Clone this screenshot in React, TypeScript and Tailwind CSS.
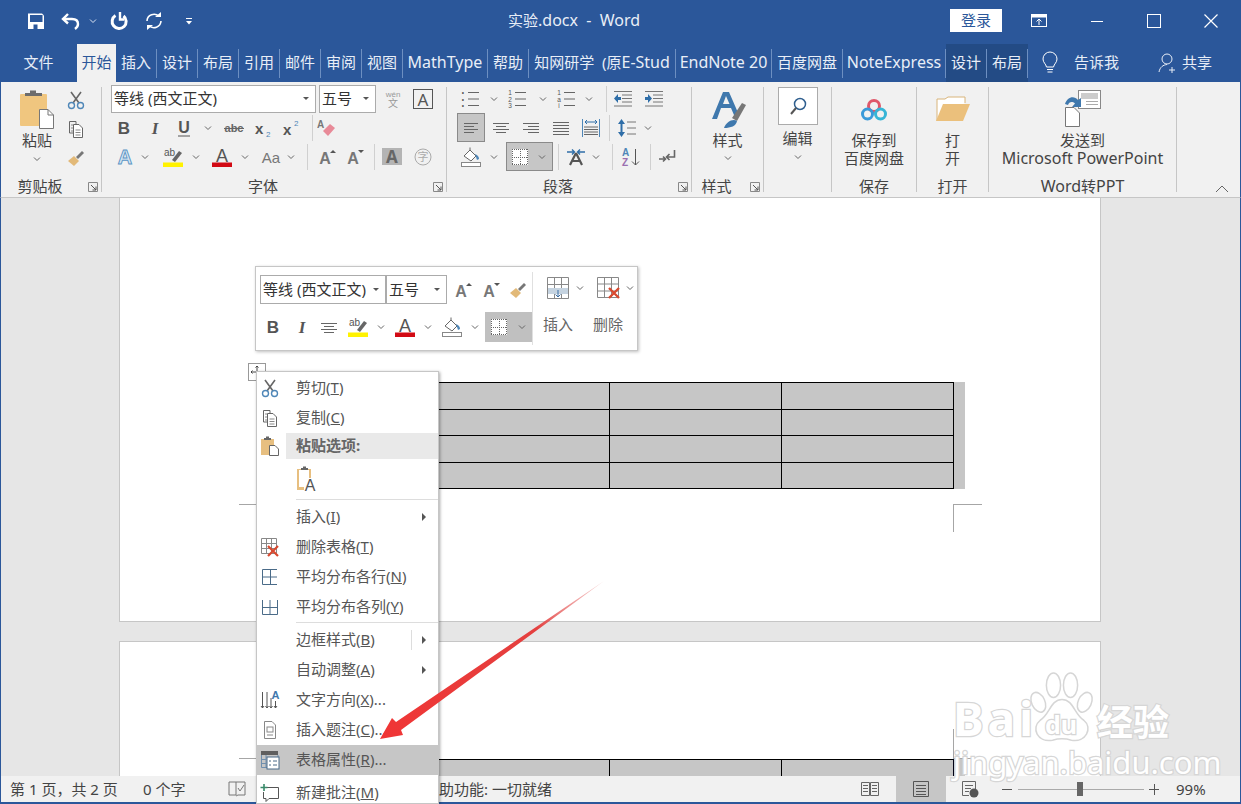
import type { ReactNode } from 'react';

const SANS = "font-['Noto_Sans','Noto_Sans_CJK_SC',sans-serif]";
const ROW_HEIGHTS = ['h-[28px]', 'h-[26px]', 'h-[27px]', 'h-[26px]'];

interface IconProps {
  className?: string;
  children?: ReactNode;
  w?: number;
  h?: number;
}

function Ic({ className = '', children, w = 20, h = 20 }: IconProps) {
  return (
    <svg className={'shrink-0 ' + className} width={w} height={h} viewBox={'0 0 ' + w + ' ' + h} fill="none">
      {children}
    </svg>
  );
}

function Latin({ children }: { children: ReactNode }) {
  return <span className="text-[16px]">{children}</span>;
}

function Chev({ className = '', color = '#666' }: { className?: string; color?: string }) {
  return (
    <Ic className={className} w={8} h={8}>
      <path d="M1 2.5 4 5.5 7 2.5" stroke={color} strokeWidth="1" />
    </Ic>
  );
}

function Sep({ className = '' }: { className?: string }) {
  return <span className={'h-[26px] w-px shrink-0 bg-[#d0d0d0] ' + className} />;
}

function Letter({ className = '', children, fill = '#555', size = 17, weight = 700, italic = false, serif = false }: { className?: string; children: ReactNode; fill?: string; size?: number; weight?: number; italic?: boolean; serif?: boolean }) {
  return (
    <Ic className={className}>
      <text x="10" y="16" textAnchor="middle" fontSize={size} fontWeight={weight} fontStyle={italic ? 'italic' : 'normal'} fontFamily={serif ? 'Liberation Serif' : 'Liberation Sans'} fill={fill}>
        {children}
      </text>
    </Ic>
  );
}

function Scissors({ className = '' }: { className?: string }) {
  return (
    <Ic className={className}>
      <path d="M5 2 13 13M15 2 7 13" stroke="#666" strokeWidth="1.6" />
      <circle cx="5.5" cy="15.5" r="3" stroke="#4f87b8" strokeWidth="1.4" />
      <circle cx="14.5" cy="15.5" r="3" stroke="#4f87b8" strokeWidth="1.4" />
    </Ic>
  );
}

function CopyIcon({ className = '' }: { className?: string }) {
  return (
    <Ic className={className}>
      <path d="M3.5 2.5H10V5M3.5 2.5V14H7" stroke="#666" />
      <path d="M7.5 5.5H13L16.5 9V18.5H7.5Z" fill="#fff" stroke="#666" />
      <path d="M5 6h2M5 9h2M5 12h2M9.5 11h5M9.5 13.5h5M9.5 16h5" stroke="#888" />
    </Ic>
  );
}

function Brush({ className = '' }: { className?: string }) {
  return (
    <Ic className={className}>
      <path d="M2 13 8 8 13 13 8 18Z" fill="#e2b978" />
      <path d="M10 9 16 3 18 5 12 11Z" fill="#777" />
    </Ic>
  );
}

function PasteBig() {
  return (
    <Ic w={36} h={40}>
      <rect x="1" y="4" width="27" height="32" rx="1" fill="#f0c67f" />
      <path d="M6 6V3H11V0.5H17V3H23V6Z" fill="#6d6d6d" />
      <path d="M20.5 19.5H29L34.5 25V38.5H20.5Z" fill="#fff" stroke="#777" />
      <path d="M29 19.5V25H34.5" stroke="#777" />
    </Ic>
  );
}

function AUp({ className = '', down = false }: { className?: string; down?: boolean }) {
  return (
    <Ic className={className}>
      <text x="8" y="17" textAnchor="middle" fontSize="16" fontWeight="700" fontFamily="Liberation Sans" fill="#777">A</text>
      <path d={down ? 'M13 3h6l-3 3Z' : 'M13 6h6l-3-3Z'} fill="#555" />
    </Ic>
  );
}

function Highlight({ className = '' }: { className?: string }) {
  return (
    <Ic className={className}>
      <text x="1" y="9" fontSize="10" fontFamily="Liberation Sans" fill="#555">ab</text>
      <path d="M9 13 16 4 19 6 12 15Z" fill="#666" />
      <rect y="15.5" width="20" height="4.5" fill="#fff200" />
    </Ic>
  );
}

function FontColor({ className = '' }: { className?: string }) {
  return (
    <Ic className={className}>
      <text x="10" y="15" textAnchor="middle" fontSize="18" fontWeight="400" fontFamily="Liberation Sans" fill="#555">A</text>
      <rect y="15.5" width="20" height="4.5" fill="#d20a14" />
    </Ic>
  );
}

function FillIcon({ className = '' }: { className?: string }) {
  return (
    <Ic className={className}>
      <path d="M3 9 9 3 15 9 10 14Z" fill="#fff" stroke="#666" />
      <path d="M9 3V0.5" stroke="#666" />
      <path d="M14 7c3 1 4 3 4 5l-2 1Z" fill="#4f87b8" />
      <rect x="0.5" y="15.5" width="19" height="4" fill="#fff" stroke="#888" />
    </Ic>
  );
}

function BorderGrid({ className = '' }: { className?: string }) {
  return (
    <Ic className={className}>
      <rect x="2" y="2" width="16" height="16" fill="#fff" />
      <path d="M2 2.5H18M2 17.5H18M2.5 2V18M17.5 2V18M10.5 2V18M2 10.5H18" stroke="#666" strokeDasharray="1 1" />
    </Ic>
  );
}

function Lines({ className = '', rows, color = '#666' }: { className?: string; rows: number[][]; color?: string }) {
  return (
    <Ic className={className}>
      {rows.map((r, i) => (
        <path key={i} d={'M' + r[0] + ' ' + (r[2] + 0.5) + 'H' + r[1]} stroke={color} />
      ))}
    </Ic>
  );
}

function ListIcon({ className = '', marks }: { className?: string; marks: string[] }) {
  return (
    <Ic className={className}>
      {marks.map((m, i) => (
        <text key={i} x="3" y={6 + i * 6.5} textAnchor="middle" fontSize="6.5" fontFamily="Liberation Sans" fill="#555">{m}</text>
      ))}
      <path d="M8 3.5H19M8 10H19M8 16.5H19" stroke="#666" />
    </Ic>
  );
}

function IndentIcon({ className = '', right = false }: { className?: string; right?: boolean }) {
  return (
    <Ic className={className}>
      <path d="M1 2.5H19M9 6H19M9 9.5H19M9 13H19M1 17H19" stroke="#777" />
      <path d={right ? 'M1 8H4V5L8 9.5 4 14V11H1Z' : 'M8 8H5V5L1 9.5 5 14V11H8Z'} fill="#2f6ea8" />
    </Ic>
  );
}

function TableInsert({ className = '' }: { className?: string }) {
  return (
    <Ic className={className} w={22} h={22}>
      <path d="M.5.5H21.5V21.5H.5ZM7.5.5V21.5M14.5.5V21.5M.5 7.5H21.5M.5 14.5H21.5" stroke="#888" />
      <rect x="1" y="11" width="20" height="6" fill="#c5d3e0" />
      <path d="M11 13V20M8.5 17.5 11 20 13.5 17.5" stroke="#3a6ea5" />
    </Ic>
  );
}

function TableDelete({ className = '' }: { className?: string }) {
  return (
    <Ic className={className} w={24} h={22}>
      <path d="M.5.5H21.5V20.5H.5ZM7.5.5V20.5M14.5.5V20.5M.5 7H21.5M.5 14H21.5" stroke="#888" />
      <path d="M12 11 22 21M22 11 12 21" stroke="#d8492f" strokeWidth="2.4" />
    </Ic>
  );
}

function Launcher() {
  return (
    <Ic className="absolute right-[3px] top-[7px]" w={10} h={10}>
      <path d="M.5 9.5V.5H9.5V9.5Z" stroke="#888" />
      <path d="M3 3 8 8M4.5 8H8V4.5" stroke="#555" />
    </Ic>
  );
}

function GroupLabel({ children, launcher = false }: { children: ReactNode; launcher?: boolean }) {
  return (
    <div className={'relative mt-auto flex h-[22px] shrink-0 items-center justify-center ' + (launcher ? 'pr-[22px]' : '')}>
      <span>{children}</span>
      {launcher && <Launcher />}
    </div>
  );
}

function RibbonSep() {
  return <span className="mt-[5px] h-[105px] w-px shrink-0 bg-[#c6c6c6]" />;
}

function TitleBar() {
  return (
    <div className="flex h-[41px] items-center text-[#e8eef7]">
      <Ic className="ml-[26px]">
        <path d="M2 2.5H16L18 4.5V18H2Z" fill="#fff" />
        <rect x="4" y="4" width="12.5" height="7" fill="#2b579a" />
        <rect x="7.5" y="13.5" width="4" height="4.5" fill="#2b579a" />
      </Ic>
      <Ic className="ml-[14px]">
        <path d="M8 3 3 8 8 12.5" stroke="#fff" strokeWidth="2.4" />
        <path d="M4 8H12C16 8 18 10 18 13C18 15 17 16.5 15 18" stroke="#fff" strokeWidth="2.4" />
      </Ic>
      <Chev className="ml-[9px]" color="#dbe4f2" />
      <Ic className="ml-[12px]">
        <path d="M6.5 4.5A7 7 0 1 0 14.5 5" stroke="#fff" strokeWidth="3" />
        <path d="M11 1V8.5H15" stroke="#fff" strokeWidth="2.4" />
      </Ic>
      <Ic className="ml-[15px]">
        <path d="M3 10A7 7 0 0 1 15 5.5M17 10A7 7 0 0 1 5 14.5" stroke="#fff" strokeWidth="1.6" />
        <path d="M11 6H17V1ZM9 14H3V19Z" fill="#fff" />
      </Ic>
      <Ic className="ml-[21px]" w={8} h={10}>
        <path d="M1 2.5H7" stroke="#fff" />
        <path d="M1 5H7L4 8.5Z" fill="#fff" />
      </Ic>
      <span className="ml-[315px] whitespace-pre pb-[1px] text-[15px]">实验<Latin>.docx  -  Word</Latin></span>
      <div className="ml-auto flex items-center pr-[20px]">
        <span className="flex h-[23px] w-[52px] items-center justify-center bg-white text-[15px] text-[#2b579a]">登录</span>
        <Ic className="ml-[27px]">
          <rect x="2.5" y="3.5" width="15" height="12" stroke="#fff" />
          <rect x="3" y="4" width="14" height="2.5" fill="#fff" />
          <path d="M10 14V8M7.5 10.5 10 8 12.5 10.5" stroke="#fff" />
        </Ic>
        <Ic className="ml-[38px]">
          <path d="M4 10.5H16" stroke="#fff" />
        </Ic>
        <Ic className="ml-[37px]">
          <rect x="3.5" y="3.5" width="13" height="13" stroke="#fff" />
        </Ic>
        <Ic className="ml-[37px]">
          <path d="M3.5 3.5 16.5 16.5M16.5 3.5 3.5 16.5" stroke="#fff" strokeWidth="1.2" />
        </Ic>
      </div>
    </div>
  );
}

function Tab({ className, children, dark = false }: { className: string; children: ReactNode; dark?: boolean }) {
  return (
    <div className={'flex h-full shrink-0 items-center ' + (dark ? 'bg-[#234b85] ' : '') + className}>
      <div className="flex h-[29px] w-full items-center justify-center whitespace-pre border-r border-[#6d8fc1] pb-[2px]">{children}</div>
    </div>
  );
}

function TabBar() {
  return (
    <div className="flex h-[41px] pt-[3px] text-[15px] text-[#e8eef7]">
      <div className="flex w-[77px] items-center justify-center pb-[2px]">文件</div>
      <div className="flex w-[39px] items-center justify-center bg-[#f1f1f1] pb-[2px] text-[#2b579a]">开始</div>
      <Tab className="w-[41px]">插入</Tab>
      <Tab className="w-[41px]">设计</Tab>
      <Tab className="w-[41px]">布局</Tab>
      <Tab className="w-[41px]">引用</Tab>
      <Tab className="w-[41px]">邮件</Tab>
      <Tab className="w-[41px]">审阅</Tab>
      <Tab className="w-[41px]">视图</Tab>
      <Tab className="w-[85px]"><Latin>MathType</Latin></Tab>
      <Tab className="w-[41px]">帮助</Tab>
      <Tab className="w-[147px]">知网研学  (原<Latin>E-Stud</Latin></Tab>
      <Tab className="w-[96px]"><Latin>EndNote 20</Latin></Tab>
      <Tab className="w-[71px]">百度网盘</Tab>
      <Tab className="w-[103px]"><Latin>NoteExpress</Latin></Tab>
      <Tab className="w-[41px]" dark>设计</Tab>
      <Tab className="w-[41px]" dark>布局</Tab>
      <Ic className="ml-[12px] self-center" w={20} h={24}>
        <path d="M6.5 16C6 13 3 11.5 3 8A7 7 0 0 1 17 8C17 11.5 14 13 13.5 16Z" stroke="#fff" />
        <path d="M7 18.5H13M7.5 21H12.5" stroke="#fff" />
      </Ic>
      <span className="ml-[14px] self-center pb-[2px]">告诉我</span>
      <Ic className="ml-[39px] self-center" w={20} h={22}>
        <circle cx="9" cy="7" r="5" stroke="#e8eef7" />
        <path d="M1 20C2 15 5 13 9 12.5" stroke="#e8eef7" />
        <path d="M14 15V21M11 18H17" stroke="#e8eef7" />
      </Ic>
      <span className="ml-[4px] self-center pb-[2px]">共享</span>
    </div>
  );
}

function ClipboardGroup() {
  return (
    <div className="flex h-full w-[100px] shrink-0 flex-col">
      <div className="flex">
        <div className="ml-[8px] flex w-[56px] flex-col items-center pt-[8px]">
          <PasteBig />
          <span className="mt-[1px] leading-[18px]">粘贴</span>
          <Chev className="mt-[6px]" />
        </div>
        <div className="ml-[1px] flex w-5 flex-col gap-[9px] pt-[8px]">
          <Scissors />
          <CopyIcon />
          <Brush />
        </div>
      </div>
      <GroupLabel launcher>剪贴板</GroupLabel>
    </div>
  );
}

function Combo({ className, children }: { className: string; children: ReactNode }) {
  return (
    <div className={'flex items-center justify-between border border-[#ababab] bg-white pb-[1px] pl-[2px] pr-[6px] text-[#333] ' + className}>
      <span className="whitespace-pre">{children}</span>
      <span className="h-0 w-0 border-x-[3px] border-t-[3px] border-x-transparent border-t-[#555]" />
    </div>
  );
}

function FontGroup() {
  return (
    <div className="flex h-full w-[344px] shrink-0 flex-col">
      <div className="mt-[3px] flex h-[28px] items-center">
        <Combo className="ml-[9px] h-[28px] w-[205px]">等线 (西文正文)</Combo>
        <Combo className="ml-[3px] h-[28px] w-[57px]">五号</Combo>
        <Ic className="ml-[7px]">
          <text x="10" y="8" textAnchor="middle" fontSize="8" fontFamily="Liberation Sans" fill="#999">wén</text>
          <text x="10" y="18" textAnchor="middle" fontSize="10" fontFamily="Noto Sans CJK SC" fill="#999">文</text>
        </Ic>
        <span className="ml-[10px] flex h-[20px] w-[20px] items-center justify-center border border-[#555] text-[17px] leading-none text-[#555]">A</span>
      </div>
      <div className="flex h-[29px] items-center">
        <Letter className="ml-[12px]">B</Letter>
        <Letter className="ml-[11px]" italic serif>I</Letter>
        <Ic className="ml-[9px]">
          <text x="10" y="15" textAnchor="middle" fontSize="16" fontWeight="700" fontFamily="Liberation Sans" fill="#555">U</text>
          <path d="M4 18H16" stroke="#555" />
        </Ic>
        <Chev className="ml-[10px]" />
        <Ic className="ml-[12px]">
          <text x="10" y="14" textAnchor="middle" fontSize="11" fontFamily="Liberation Sans" fontWeight="700" fill="#666">abc</text>
          <path d="M0 10.5H20" stroke="#666" />
        </Ic>
        <Ic className="ml-[10px]">
          <text x="1" y="16" fontSize="15" fontWeight="700" fontFamily="Liberation Sans" fill="#555">x</text>
          <text x="12" y="19" fontSize="8" fontFamily="Liberation Sans" fill="#4f87b8">2</text>
        </Ic>
        <Ic className="ml-[8px]">
          <text x="1" y="17" fontSize="15" fontWeight="700" fontFamily="Liberation Sans" fill="#555">x</text>
          <text x="12" y="8" fontSize="8" fontFamily="Liberation Sans" fill="#4f87b8">2</text>
        </Ic>
        <Sep className="ml-[10px]" />
        <Ic className="ml-[4px]">
          <text x="0" y="10" fontSize="10" fontWeight="700" fontFamily="Liberation Sans" fill="#777">A</text>
          <path d="M6 13 13 6 18 10 11 18Z" fill="#e88a98" />
        </Ic>
      </div>
      <div className="flex h-[29px] items-center">
        <Ic className="ml-[13px]">
          <text x="10" y="17" textAnchor="middle" fontSize="20" fontWeight="700" fontFamily="Liberation Sans" fill="#d6e6f3" stroke="#5b95c5" strokeWidth=".9">A</text>
        </Ic>
        <Chev className="ml-[6px]" />
        <Highlight className="ml-[14px]" />
        <Chev className="ml-[9px]" />
        <FontColor className="ml-[12px]" />
        <Chev className="ml-[9px]" />
        <Letter className="ml-[12px]" fill="#777" size={15} weight={400}>Aa</Letter>
        <Chev className="ml-[6px]" />
        <Sep className="ml-[12px]" />
        <AUp className="ml-[9px]" />
        <AUp className="ml-[8px]" down />
        <Sep className="ml-[9px]" />
        <span className="ml-[7px] flex h-[17px] w-5 items-center justify-center bg-[#b4b4b4] text-[17px] font-bold leading-none text-[#666]">A</span>
        <Ic className="ml-[11px]">
          <circle cx="10" cy="10" r="8" stroke="#aaa" />
          <text x="10" y="14" textAnchor="middle" fontSize="11" fontFamily="Noto Sans CJK SC" fill="#aaa">字</text>
        </Ic>
      </div>
      <GroupLabel launcher>字体</GroupLabel>
    </div>
  );
}

function ParagraphGroup() {
  return (
    <div className="flex h-full w-[244px] shrink-0 flex-col">
      <div className="mt-[3px] flex h-[28px] items-center">
        <ListIcon className="ml-[13px]" marks={['•', '•', '•']} />
        <Chev className="ml-[10px]" />
        <ListIcon className="ml-[9px]" marks={['1', '2', '3']} />
        <Chev className="ml-[12px]" />
        <ListIcon className="ml-[9px]" marks={['1', 'a', 'i']} />
        <Chev className="ml-[9px]" />
        <Sep className="ml-[13px]" />
        <IndentIcon className="ml-[6px]" />
        <IndentIcon className="ml-[11px]" right />
      </div>
      <div className="flex h-[29px] items-center">
        <span className="ml-[10px] flex h-[29px] w-[28px] items-center justify-center border border-[#8a8a8a] bg-[#c6c6c6]">
          <Lines rows={[[3, 17, 5], [3, 13, 8], [3, 17, 11], [3, 13, 14]]} />
        </span>
        <Lines className="ml-[6px]" rows={[[2, 18, 5], [5, 15, 8], [2, 18, 11], [5, 15, 14]]} />
        <Lines className="ml-[10px]" rows={[[2, 18, 5], [7, 18, 8], [2, 18, 11], [7, 18, 14]]} />
        <Lines className="ml-[10px]" rows={[[2, 18, 4], [2, 18, 7], [2, 18, 10], [2, 18, 13], [2, 18, 16]]} />
        <Ic className="ml-[10px]">
          <path d="M1.5 1V19M18.5 1V19" stroke="#4f87b8" />
          <path d="M4 4H16M6 2 4 4 6 6M14 2 16 4 14 6" stroke="#2f6ea8" />
          <path d="M3 9H17M3 11.5H17M3 14H17M3 16.5H17" stroke="#666" />
        </Ic>
        <Sep className="ml-[8px]" />
        <Ic className="ml-[7px]">
          <path d="M10 4H19M10 10H19M10 16H19" stroke="#777" />
          <path d="M4.5 1 8 6H1ZM4.5 19 8 14H1Z" fill="#2f6ea8" />
          <path d="M3.5 6H5.5V14H3.5Z" fill="#2f6ea8" />
        </Ic>
        <Chev className="ml-[7px]" />
      </div>
      <div className="flex h-[29px] items-center">
        <FillIcon className="ml-[14px]" />
        <Chev className="ml-[9px]" />
        <span className="ml-[8px] flex h-[29px] w-[47px] items-center justify-between border border-[#8a8a8a] bg-[#c6c6c6] pl-[3px] pr-[6px]">
          <BorderGrid />
          <Chev />
        </span>
        <Sep className="ml-[5px]" />
        <Ic className="ml-[7px]">
          <path d="M1 5H8M6 2.5 8.5 5 6 7.5M19 5H12M14 2.5 11.5 5 14 7.5" stroke="#2f6ea8" strokeWidth="1.4" />
          <path d="M10 6 4 18M10 6 16 18M6 14H14" stroke="#555" strokeWidth="2.2" />
        </Ic>
        <Chev className="ml-[6px]" />
        <Sep className="ml-[12px]" />
        <Ic className="ml-[8px]">
          <text x="1" y="9" fontSize="10" fontWeight="700" fontFamily="Liberation Sans" fill="#4f87b8">A</text>
          <text x="1" y="19" fontSize="10" fontWeight="700" fontFamily="Liberation Sans" fill="#9a6fb0">Z</text>
          <path d="M14.5 2V18M11 14.5 14.5 18 18 14.5" stroke="#555" />
        </Ic>
        <Sep className="ml-[9px]" />
        <Ic className="ml-[6px]">
          <path d="M17.5 3V10H10M12.5 7 9.5 10 12.5 13" stroke="#666" strokeWidth="1.6" />
          <path d="M2 12H8M6 9.5 8.5 12 6 14.5" stroke="#666" strokeWidth="1.6" />
        </Ic>
      </div>
      <GroupLabel launcher>段落</GroupLabel>
    </div>
  );
}

function BigLine({ children }: { children: ReactNode }) {
  return <span className="whitespace-pre leading-[18px]">{children}</span>;
}

function RibbonGroups() {
  return (
    <>
      <div className="flex h-full w-[71px] shrink-0 flex-col">
        <div className="flex flex-col items-center">
          <div className="flex h-[49px] items-end pb-[2px]">
            <Ic w={38} h={38}>
              <path d="M3 28 14 1H20L30 24H25L22 17H12L8 28Z" fill="#3f78ad" />
              <path d="M14 13H20.5L17 5Z" fill="#f1f1f1" />
              <path d="M23 27 33 12 37 14 28 30Z" fill="#777" />
              <path d="M15 37C17 31 24 27 28 30C27 35 22 37 15 37Z" fill="#3f78ad" />
            </Ic>
          </div>
          <BigLine>样式</BigLine>
          <span className="flex h-[18px] items-center"><Chev /></span>
        </div>
        <GroupLabel launcher>样式</GroupLabel>
      </div>
      <RibbonSep />
      <div className="flex h-full w-[67px] shrink-0 flex-col items-center">
        <div className="mt-[5px] flex h-[38px] w-[40px] items-center justify-center border border-[#ababab] bg-white">
          <Ic>
            <circle cx="12" cy="8" r="5.5" stroke="#2f5f8f" strokeWidth="1.5" />
            <path d="M8 12 3 18" stroke="#555" strokeWidth="2" />
          </Ic>
        </div>
        <span className="mt-[4px] leading-[18px]">编辑</span>
        <span className="flex h-[20px] items-center"><Chev /></span>
      </div>
      <RibbonSep />
      <div className="flex h-full w-[84px] shrink-0 flex-col">
        <div className="flex flex-col items-center">
          <div className="flex h-[49px] items-end pb-[9px]">
            <Ic w={28} h={24}>
              <circle cx="14" cy="8" r="5.5" stroke="#e0586a" strokeWidth="3" />
              <circle cx="7.5" cy="16" r="5" stroke="#3a9ad9" strokeWidth="3" />
              <circle cx="20.5" cy="16" r="5" stroke="#37b5d6" strokeWidth="3" />
            </Ic>
          </div>
          <BigLine>保存到</BigLine>
          <BigLine>百度网盘</BigLine>
        </div>
        <GroupLabel>保存</GroupLabel>
      </div>
      <RibbonSep />
      <div className="flex h-full w-[71px] shrink-0 flex-col">
        <div className="flex flex-col items-center">
          <div className="flex h-[49px] items-end pb-[9px]">
            <Ic w={36} h={26}>
              <path d="M2 25V3H10L13 1H30V7" stroke="#d8b47a" fill="#fff" />
              <path d="M1 25 8 8H35L28 25Z" fill="#ebc07c" />
            </Ic>
          </div>
          <BigLine>打</BigLine>
          <BigLine>开</BigLine>
        </div>
        <GroupLabel>打开</GroupLabel>
      </div>
      <RibbonSep />
      <div className="flex h-full w-[187px] shrink-0 flex-col">
        <div className="flex flex-col items-center">
          <div className="flex h-[49px] items-end pb-[4px]">
            <Ic w={38} h={37}>
              <rect x="14.5" y=".5" width="22" height="18" fill="#fff" stroke="#888" />
              <rect x="17" y="3" width="17" height="6" fill="#ccc" />
              <path d="M22 11.5H34M22 14.5H34" stroke="#aaa" />
              <path d="M1 14C3 7 10 5 14 10L17 8V17H8L11 13.5C8 11 5 12 4 15Z" fill="#3f78ad" />
              <path d="M1.5 17.5H10L15.5 23V36.5H1.5Z" fill="#fff" stroke="#777" />
            </Ic>
          </div>
          <BigLine>发送到</BigLine>
          <BigLine><Latin>Microsoft PowerPoint</Latin></BigLine>
        </div>
        <GroupLabel><Latin>Word</Latin>转<Latin>PPT</Latin></GroupLabel>
      </div>
      <RibbonSep />
      <div className="flex flex-1 items-end justify-end pb-[3px] pr-[11px]">
        <Ic w={14} h={10}>
          <path d="M1 8 7 2 13 8" stroke="#666" />
        </Ic>
      </div>
    </>
  );
}

function Ribbon() {
  return (
    <div className="flex h-[116px] border-x border-b border-x-[#2b579a] border-b-[#c6c6c6] bg-[#f1f1f1] text-[15px] text-[#444]">
      <ClipboardGroup />
      <RibbonSep />
      <FontGroup />
      <RibbonSep />
      <ParagraphGroup />
      <RibbonSep />
      <RibbonGroups />
    </div>
  );
}

function TableRows({ rows }: { rows: number }) {
  return (
    <div className="ml-[146px]">
      {Array.from({ length: rows }).map((_, i) => (
        <div key={i} className={'flex ' + ROW_HEIGHTS[i]}>
          {[0, 1, 2, 3].map((c) => (
            <div key={c} className={'w-[172px] border-b border-r border-black bg-[#c6c6c6] ' + (i === 0 ? 'border-t' : '')} />
          ))}
          <div className="w-[11px] bg-[#c6c6c6]" />
        </div>
      ))}
    </div>
  );
}

function DocumentArea() {
  return (
    <div className="flex h-[578px] flex-col gap-[19px] overflow-hidden border-x border-x-[#2b579a] bg-[#e6e6e6] pl-[118px]">
      <div className="relative h-[424px] w-[982px] shrink-0 border-x border-b border-[#c6c6c6] bg-white pt-[184px]">
        <TableRows rows={4} />
        <span className="absolute left-[119px] top-[306px] h-px w-[18px] bg-[#a6a6a6]" />
        <span className="absolute left-[833px] top-[306px] h-[28px] w-[29px] border-l border-t border-[#a6a6a6]" />
      </div>
      <div className="relative h-[300px] w-[982px] shrink-0 border border-[#c6c6c6] bg-white pt-[117px]">
        <TableRows rows={1} />
        <span className="absolute left-[119px] top-[116px] h-px w-[18px] bg-[#a6a6a6]" />
        <span className="absolute left-[833px] top-[87px] h-[30px] w-px bg-[#a6a6a6]" />
        <span className="absolute left-[833px] top-[116px] h-px w-[28px] bg-[#a6a6a6]" />
      </div>
    </div>
  );
}

function StatusBar() {
  return (
    <div className="flex h-[28px] items-center border-x border-b-2 border-x-[#2b579a] border-b-[#2b579a] bg-[#f1f1f1] text-[15px] text-[#444]">
      <span className="ml-[9px] w-[133px] whitespace-pre">第 1 页，共 2 页</span>
      <span className="w-[84px] whitespace-pre">0 个字</span>
      <Ic>
        <path d="M2 3H9V16H2ZM9 3H18V16H11L9 17" stroke="#777" />
        <path d="M11 9 13 12 17 6" stroke="#777" />
      </Ic>
      <span className="ml-[177px] w-[436px]">辅助功能: 一切就绪</span>
      <Ic>
        <path d="M1.5 3.5H9.5V16.5H1.5ZM10.5 3.5H18.5V16.5H10.5ZM3 6.5H8M3 9.5H8M3 12.5H8M12 6.5H17M12 9.5H17M12 12.5H17" stroke="#666" />
      </Ic>
      <span className="ml-[16px] flex h-full w-[50px] items-center justify-center bg-[#c6c6c6]">
        <Ic>
          <path d="M2.5 2.5H17.5V17.5H2.5ZM5 6.5H15M5 9.5H15M5 12.5H15M5 15.5H15" stroke="#555" />
        </Ic>
      </span>
      <Ic className="ml-[14px]">
        <path d="M2.5 2.5H15.5V10M2.5 2.5V16.5H9M5 6.5H13M5 9.5H11M5 12.5H9" stroke="#666" />
        <circle cx="14" cy="14" r="4.5" fill="#555" />
      </Ic>
      <span className="ml-[22px] h-px w-[10px] bg-[#555]" />
      <div className="ml-[6px] flex h-px w-[126px] items-center bg-[#aaa]">
        <span className="ml-[59px] h-[14px] w-[6px] bg-[#666]" />
      </div>
      <span className="relative ml-[5px] h-px w-[10px] bg-[#555]">
        <span className="absolute left-[4.5px] top-[-5px] h-[11px] w-px bg-[#555]" />
      </span>
      <span className="ml-[17px]">99%</span>
    </div>
  );
}

function MiniToolbar() {
  return (
    <div className="absolute left-[255px] top-[266px] flex h-[85px] w-[383px] border border-[#c6c6c6] bg-white text-[15px] text-[#444] shadow-[1px_1px_3px_rgba(0,0,0,0.25)]">
      <div className="w-[276px] shrink-0">
        <div className="mt-[8px] flex h-[29px] items-center">
          <Combo className="ml-[4px] h-[29px] w-[126px]">等线 (西文正文)</Combo>
          <Combo className="h-[29px] w-[61px]">五号</Combo>
          <AUp className="ml-[6px]" />
          <AUp className="ml-[8px]" down />
          <Brush className="ml-[7px]" />
        </div>
        <div className="mt-[8px] flex h-[30px] items-center">
          <Letter className="ml-[7px]">B</Letter>
          <Letter className="ml-[9px]" italic serif>I</Letter>
          <Lines className="ml-[7px]" rows={[[2, 18, 6], [5, 15, 9], [2, 18, 12], [5, 15, 15]]} />
          <Highlight className="ml-[9px]" />
          <Chev className="ml-[9px]" />
          <FontColor className="ml-[10px]" />
          <Chev className="ml-[9px]" />
          <FillIcon className="ml-[10px]" />
          <Chev className="ml-[9px]" />
          <span className="ml-[6px] flex h-[30px] w-[47px] items-center justify-between bg-[#c0c0c0] pl-[4px] pr-[6px]">
            <BorderGrid />
            <Chev />
          </span>
        </div>
      </div>
      <span className="mt-[5px] h-[73px] w-px bg-[#e0e0e0]" />
      <div className="flex w-[50px] flex-col items-center pt-[10px]">
        <div className="ml-[14px] flex items-center gap-[7px]">
          <TableInsert />
          <Chev />
        </div>
        <span className="mt-[14px] text-[#666]">插入</span>
      </div>
      <div className="flex w-[50px] flex-col items-center pt-[10px]">
        <div className="ml-[14px] flex items-center gap-[5px]">
          <TableDelete />
          <Chev />
        </div>
        <span className="mt-[14px] text-[#666]">删除</span>
      </div>
    </div>
  );
}

interface MenuItemProps {
  icon?: ReactNode;
  label: string;
  accel: string;
  tail?: string;
  arrow?: boolean;
  divider?: boolean;
  active?: boolean;
}

function MenuItem({ icon, label, accel, tail = '', arrow, divider, active }: MenuItemProps) {
  return (
    <div className={'flex h-[30px] items-center ' + (active ? 'bg-[#c6c6c6]' : '')}>
      <span className="flex w-[26px] justify-center">{icon}</span>
      <span className="ml-[13px] whitespace-pre pb-[2px]">
        {label}(<u>{accel}</u>){tail}
      </span>
      {arrow && (
        <>
          {divider && <span className="ml-auto h-[20px] w-px bg-[#ddd]" />}
          <span className={(divider ? 'ml-[10px] ' : 'ml-auto ') + 'mr-[12px] h-0 w-0 border-y-[4px] border-l-[4px] border-y-transparent border-l-[#555]'} />
        </>
      )}
    </div>
  );
}

function ContextMenu() {
  return (
    <div className="absolute left-[256px] top-[371px] h-[433px] w-[183px] overflow-hidden border border-[#c6c6c6] bg-white pt-px text-[15px] text-[#555] shadow-[1px_1px_3px_rgba(0,0,0,0.35)]">
      <MenuItem icon={<Scissors />} label="剪切" accel="T" />
      <MenuItem icon={<CopyIcon />} label="复制" accel="C" />
      <div className="flex h-[26px] items-center">
        <span className="flex w-[26px] justify-center">
          <Ic>
            <rect x="1" y="3" width="13" height="16" fill="#e7bf80" />
            <path d="M4 4V2H6V0.5H9V2H11V4Z" fill="#666" />
            <path d="M9.5 9.5H15L18.5 13V19.5H9.5Z" fill="#fff" stroke="#666" />
          </Ic>
        </span>
        <span className="ml-[3px] flex h-full flex-1 items-center bg-[#e9e9e9] pb-[2px] pl-[10px] font-bold text-[#666]">粘贴选项:</span>
      </div>
      <div className="flex h-[40px] items-center pl-[39px]">
        <Ic w={22} h={27}>
          <path d="M1 3H15V12H8V24H1Z" fill="#e7bf80" />
          <rect x="3" y="4" width="10" height="17" fill="#fff" />
          <path d="M5 4V2H7V0.5H10V2H12V4Z" fill="#666" />
          <text x="14" y="25" textAnchor="middle" fontSize="16" fontFamily="Liberation Sans" fill="#555">A</text>
        </Ic>
      </div>
      <div className="ml-[39px] h-px bg-[#ddd]" />
      <div className="h-[2px]" />
      <MenuItem label="插入" accel="I" arrow />
      <MenuItem
        icon={
          <Ic>
            <path d="M1.5 1.5H16.5V16.5H1.5ZM6.5 1.5V16.5M11.5 1.5V16.5M1.5 6.5H16.5M1.5 11.5H16.5" stroke="#888" />
            <path d="M8 9 18 19M18 9 8 19" stroke="#d8492f" strokeWidth="2.2" />
          </Ic>
        }
        label="删除表格"
        accel="T"
      />
      <MenuItem
        icon={
          <Ic>
            <path d="M2.5 2.5H17M2.5 17.5H17M2.5 2.5V17.5M10.5 2.5V17.5M2.5 10H17" stroke="#4a6b88" />
          </Ic>
        }
        label="平均分布各行"
        accel="N"
      />
      <MenuItem
        icon={
          <Ic>
            <path d="M2.5 3V17.5H17.5V3M10 3V17.5M2.5 10.5H17.5" stroke="#4a6b88" />
          </Ic>
        }
        label="平均分布各列"
        accel="Y"
      />
      <div className="ml-[39px] h-px bg-[#ddd]" />
      <div className="h-[2px]" />
      <MenuItem label="边框样式" accel="B" arrow divider />
      <MenuItem label="自动调整" accel="A" arrow />
      <MenuItem
        icon={
          <Ic>
            <path d="M2.5 2V18M7 2V18M11 8V18M1 16 2.5 18 4 16M5.5 16 7 18 8.5 16M9.5 16 11 18 12.5 16" stroke="#555" />
            <text x="15.5" y="9" textAnchor="middle" fontSize="11" fontWeight="700" fontFamily="Liberation Sans" fill="#3f78ad">A</text>
            <path d="M15.5 11V18M14 16 15.5 18 17 16" stroke="#555" />
          </Ic>
        }
        label="文字方向"
        accel="X"
        tail="..."
      />
      <MenuItem
        icon={
          <Ic>
            <path d="M4.5 1.5H12L15.5 5V18.5H4.5Z" stroke="#888" />
            <rect x="7" y="7" width="6" height="5" stroke="#888" />
            <path d="M7 15H13" stroke="#888" />
          </Ic>
        }
        label="插入题注"
        accel="C"
        tail="..."
      />
      <MenuItem
        active
        icon={
          <Ic>
            <rect x="1" y="1" width="17" height="4" fill="#5f5f5f" />
            <path d="M1.5 5V17.5H18V5M6 5V17.5M1.5 9.5H6M1.5 13.5H6" stroke="#6f8fae" />
            <rect x="7" y="7" width="12" height="12" fill="#fff" stroke="#4a6b88" />
            <path d="M9 11H11M13 11H17M9 15H11M13 15H17" stroke="#4a6b88" />
          </Ic>
        }
        label="表格属性"
        accel="R"
        tail="..."
      />
      <div className="h-[3px]" />
      <MenuItem
        icon={
          <Ic>
            <path d="M6 4.5H18.5V15.5H9L6 18.5V15.5H3.5V9" stroke="#555" />
            <path d="M4 1V8M.5 4.5H7.5" stroke="#3a8a6a" strokeWidth="1.6" />
          </Ic>
        }
        label="新建批注"
        accel="M"
      />
    </div>
  );
}

function Watermark() {
  const stroke = 'text-white [-webkit-text-stroke:2.5px_#d6d6d6] [paint-order:stroke_fill]';
  return (
    <div className="pointer-events-none absolute left-[950px] top-[668px] h-[110px] w-[225px]">
      <svg className="absolute left-[78px] top-[3px]" width="68" height="72" viewBox="0 0 70 76" fill="#fff" stroke="#d6d6d6" strokeWidth="1.6">
        <ellipse cx="10" cy="33" rx="7" ry="11" transform="rotate(-25 10 33)" />
        <ellipse cx="26" cy="15" rx="7.5" ry="13" />
        <ellipse cx="44" cy="15" rx="7.5" ry="13" />
        <ellipse cx="59" cy="33" rx="7" ry="11" transform="rotate(25 59 33)" />
        <path d="M35 30C47 30 48 46 58 52C68 60 60 76 45 73C38 71 32 71 25 73C9 76 2 60 12 52C22 46 23 30 35 30Z" />
      </svg>
      <span className={'absolute left-[3px] top-[20px] text-[46px] font-bold leading-[60px] tracking-[4px] ' + stroke}>Bai</span>
      <span className={'absolute left-[95px] top-[39px] text-[25px] font-bold leading-[34px] ' + stroke}>du</span>
      <span className={'absolute left-[147px] top-[31px] text-[36px] font-bold leading-[48px] ' + stroke}>经验</span>
      <span className={'absolute left-[3px] top-[76px] whitespace-pre text-[31px] leading-[36px] ' + stroke}>jingyan.baidu.com</span>
    </div>
  );
}

function Arrow() {
  return (
    <svg className="pointer-events-none absolute left-[370px] top-[575px]" width="240" height="170" viewBox="370 575 240 170">
      <defs>
        <linearGradient id="arrow-fill" x1="603" y1="582" x2="380" y2="738" gradientUnits="userSpaceOnUse">
          <stop offset="0" stopColor="#e98a8a" stopOpacity=".4" />
          <stop offset=".3" stopColor="#e4403f" />
          <stop offset="1" stopColor="#f03535" />
        </linearGradient>
      </defs>
      <path d="M604 581 396 722 392 718 380 739 403 735 401 730Z" fill="url(#arrow-fill)" />
    </svg>
  );
}

export default function App() {
  return (
    <div className={'relative h-[804px] w-[1241px] overflow-hidden bg-[#2b579a] ' + SANS}>
      <TitleBar />
      <TabBar />
      <Ribbon />
      <DocumentArea />
      <StatusBar />
      <MiniToolbar />
      <span className="absolute left-[248px] top-[363px] flex h-[18px] w-[18px] items-center justify-center border border-[#999] bg-white">
        <Ic w={14} h={14}>
          <path d="M7 1V13M1 7H13M5.5 2.5 7 1 8.5 2.5M2.5 5.5 1 7 2.5 8.5" stroke="#444" />
        </Ic>
      </span>
      <ContextMenu />
      <Arrow />
      <Watermark />
    </div>
  );
}
